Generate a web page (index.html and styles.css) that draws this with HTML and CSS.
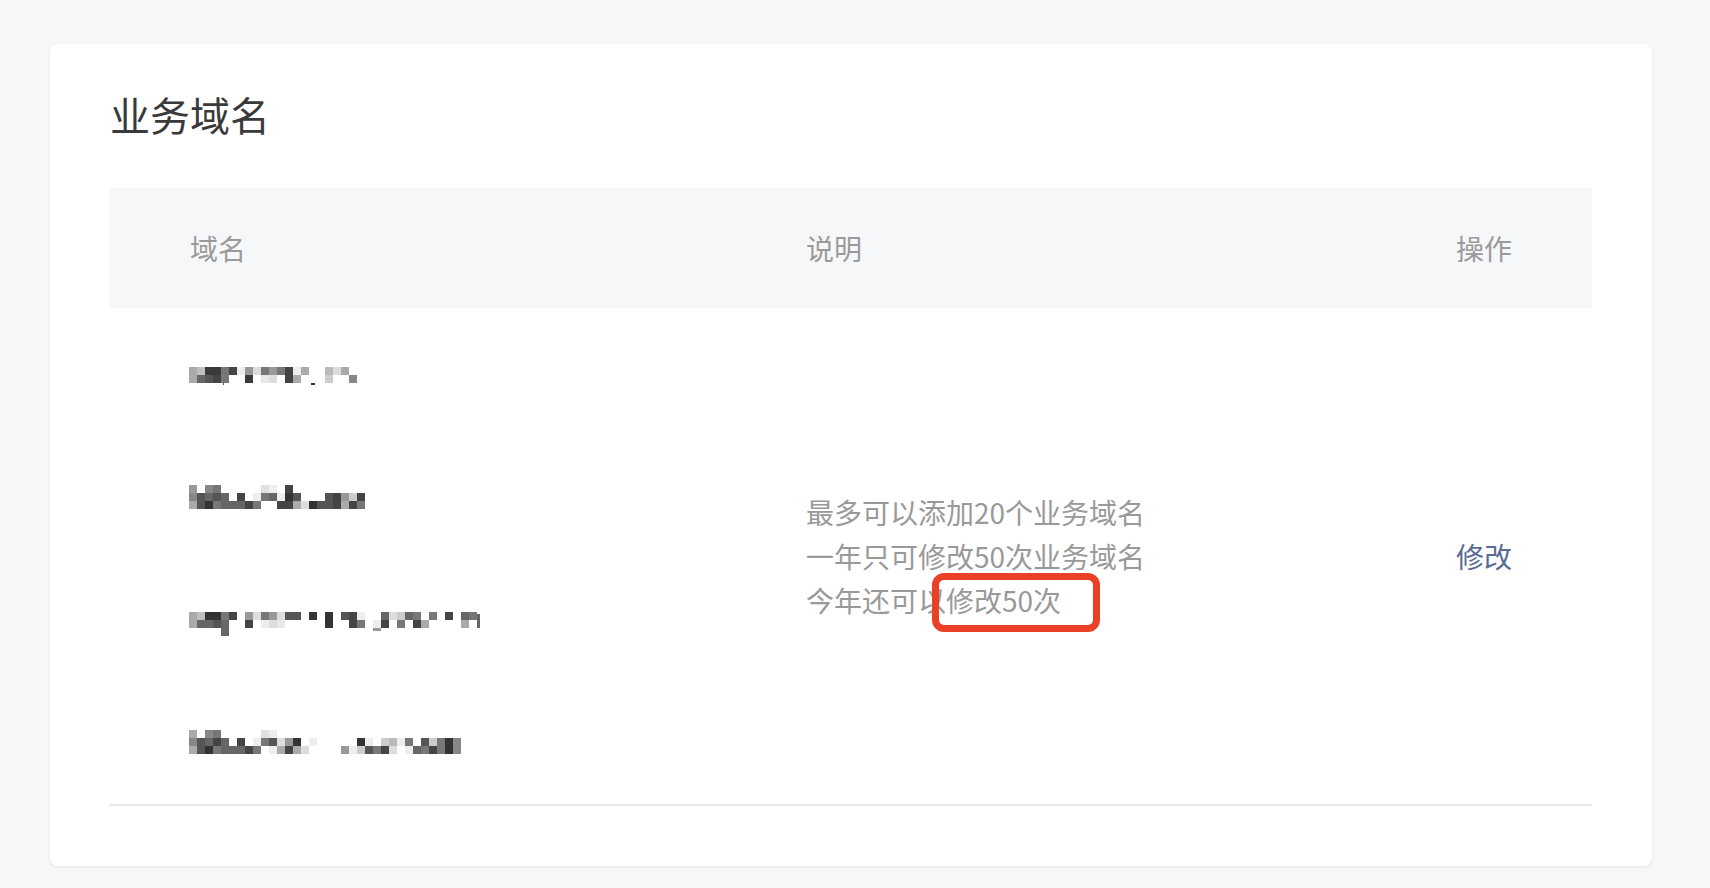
FILE: index.html
```html
<!DOCTYPE html>
<html lang="zh-CN">
<head>
<meta charset="utf-8">
<title>业务域名</title>
<link rel="stylesheet" href="styles.css">
</head>
<body>
<div class="page">
  <section class="card">
    <h2 class="title">业务域名</h2>
    <div class="table">
      <div class="thead">
        <div class="th">域名</div>
        <div class="th">说明</div>
        <div class="th th-op">操作</div>
      </div>
      <div class="tbody">
        <div class="col-domains">
          <div class="domain-row">
            <svg class="mosaic" width="168" height="40" shape-rendering="crispEdges" aria-label="已打码域名">
              <g transform="translate(0,17) scale(8)">
                <rect x="0" y="0" width="1" height="1" fill="#aaa"/><rect x="1" y="0" width="1" height="1" fill="#c0c0c0"/><rect x="2" y="0" width="1" height="1" fill="#3a3a3a"/><rect x="3" y="0" width="1" height="1" fill="#3a3a3a"/><rect x="4" y="0" width="1" height="1" fill="#777"/><rect x="5" y="0" width="1" height="1" fill="#444"/><rect x="6" y="0" width="1" height="1" fill="#eee"/><rect x="7" y="0" width="1" height="1" fill="#999"/><rect x="8" y="0" width="1" height="1" fill="#ddd"/><rect x="9" y="0" width="1" height="1" fill="#777"/><rect x="10" y="0" width="1" height="1" fill="#999"/><rect x="11" y="0" width="1" height="1" fill="#777"/><rect x="12" y="0" width="1" height="1" fill="#444"/><rect x="13" y="0" width="1" height="1" fill="#eee"/><rect x="14" y="0" width="1" height="1" fill="#aaa"/><rect x="17" y="0" width="1" height="1" fill="#bbb"/><rect x="18" y="0" width="1" height="1" fill="#ddd"/><rect x="19" y="0" width="1" height="1" fill="#aaa"/>
                <rect x="0" y="1" width="1" height="1" fill="#aaa"/><rect x="1" y="1" width="1" height="1" fill="#666"/><rect x="2" y="1" width="1" height="1" fill="#555"/><rect x="3" y="1" width="1" height="1" fill="#444"/><rect x="4" y="1" width="1" height="1" fill="#777"/><rect x="7" y="1" width="1" height="1" fill="#3a3a3a"/><rect x="9" y="1" width="1" height="1" fill="#e8e8e8"/><rect x="10" y="1" width="1" height="1" fill="#ddd"/><rect x="12" y="1" width="1" height="1" fill="#444"/><rect x="13" y="1" width="1" height="1" fill="#aaa"/><rect x="17" y="1" width="1" height="1" fill="#ccc"/><rect x="20" y="1" width="1" height="1" fill="#888"/>
                <rect x="15.2" y="2" width="0.5" height="0.3" fill="#333"/><rect x="4.2" y="2" width="0.2" height="0.3" fill="#555"/>
              </g>
            </svg>
          </div>
          <div class="domain-row">
            <svg class="mosaic" width="176" height="40" shape-rendering="crispEdges" aria-label="已打码域名">
              <g transform="translate(0,11) scale(8)">
                <rect x="0" y="0" width="1" height="1" fill="#999"/><rect x="2" y="0" width="1" height="1" fill="#888"/><rect x="3" y="0" width="1" height="1" fill="#777"/><rect x="9" y="0" width="1" height="1" fill="#e0e0e0"/><rect x="10" y="0" width="1" height="1" fill="#eee"/><rect x="12" y="0" width="1" height="1" fill="#444"/>
                <rect x="0" y="1" width="1" height="1" fill="#888"/><rect x="1" y="1" width="1" height="1" fill="#555"/><rect x="2" y="1" width="1" height="1" fill="#666"/><rect x="3" y="1" width="1" height="1" fill="#555"/><rect x="4" y="1" width="1" height="1" fill="#666"/><rect x="6" y="1" width="1" height="1" fill="#444"/><rect x="8" y="1" width="1" height="1" fill="#eee"/><rect x="9" y="1" width="1" height="1" fill="#777"/><rect x="10" y="1" width="1" height="1" fill="#666"/><rect x="11" y="1" width="1" height="1" fill="#eee"/><rect x="12" y="1" width="1" height="1" fill="#333"/><rect x="13" y="1" width="1" height="1" fill="#555"/><rect x="17" y="1" width="1" height="1" fill="#555"/><rect x="18" y="1" width="1" height="1" fill="#444"/><rect x="19" y="1" width="1" height="1" fill="#999"/><rect x="20" y="1" width="1" height="1" fill="#ccc"/><rect x="21" y="1" width="1" height="1" fill="#444"/>
                <rect x="0" y="2" width="1" height="1" fill="#aaa"/><rect x="1" y="2" width="1" height="1" fill="#555"/><rect x="2" y="2" width="1" height="1" fill="#333"/><rect x="3" y="2" width="1" height="1" fill="#777"/><rect x="4" y="2" width="1" height="1" fill="#666"/><rect x="5" y="2" width="1" height="1" fill="#666"/><rect x="6" y="2" width="1" height="1" fill="#666"/><rect x="7" y="2" width="1" height="1" fill="#444"/><rect x="8" y="2" width="1" height="1" fill="#777"/><rect x="11" y="2" width="1" height="1" fill="#444"/><rect x="12" y="2" width="1" height="1" fill="#444"/><rect x="13" y="2" width="1" height="1" fill="#aaa"/><rect x="14" y="2" width="1" height="1" fill="#ddd"/><rect x="15" y="2" width="1" height="1" fill="#333"/><rect x="16" y="2" width="1" height="1" fill="#555"/><rect x="17" y="2" width="1" height="1" fill="#555"/><rect x="18" y="2" width="1" height="1" fill="#444"/><rect x="19" y="2" width="1" height="1" fill="#aaa"/><rect x="20" y="2" width="1" height="1" fill="#444"/><rect x="21" y="2" width="1" height="1" fill="#777"/>
              </g>
            </svg>
          </div>
          <div class="domain-row">
            <svg class="mosaic" width="300" height="40" shape-rendering="crispEdges" aria-label="已打码域名">
              <g transform="translate(0,14) scale(8)">
                <rect x="0" y="0" width="1" height="1" fill="#aaa"/><rect x="1" y="0" width="1" height="1" fill="#c0c0c0"/><rect x="2" y="0" width="1" height="1" fill="#333"/><rect x="3" y="0" width="1" height="1" fill="#333"/><rect x="4" y="0" width="1" height="1" fill="#777"/><rect x="5" y="0" width="1" height="1" fill="#444"/><rect x="7" y="0" width="1" height="1" fill="#999"/><rect x="8" y="0" width="1" height="1" fill="#ddd"/><rect x="9" y="0" width="1" height="1" fill="#777"/><rect x="10" y="0" width="1" height="1" fill="#999"/><rect x="11" y="0" width="1" height="1" fill="#ddd"/><rect x="12" y="0" width="1" height="1" fill="#555"/><rect x="13" y="0" width="1" height="1" fill="#555"/><rect x="15" y="0" width="1" height="1" fill="#333"/><rect x="17" y="0" width="1" height="1" fill="#333"/><rect x="19" y="0" width="1" height="1" fill="#555"/><rect x="20" y="0" width="1" height="1" fill="#444"/><rect x="21" y="0" width="1" height="1" fill="#eee"/><rect x="24" y="0" width="1" height="1" fill="#666"/><rect x="25" y="0" width="1" height="1" fill="#ddd"/><rect x="26" y="0" width="1" height="1" fill="#ccc"/><rect x="27" y="0" width="1" height="1" fill="#666"/><rect x="28" y="0" width="1" height="1" fill="#777"/><rect x="30" y="0" width="1" height="1" fill="#777"/><rect x="32" y="0" width="1" height="1" fill="#444"/><rect x="34" y="0" width="1" height="1" fill="#666"/><rect x="35" y="0" width="1" height="1" fill="#777"/><rect x="36" y="0.3" width="0.4" height="1.7" fill="#666"/>
                <rect x="0" y="1" width="1" height="1" fill="#aaa"/><rect x="1" y="1" width="1" height="1" fill="#666"/><rect x="2" y="1" width="1" height="1" fill="#666"/><rect x="3" y="1" width="1" height="1" fill="#555"/><rect x="4" y="1" width="1" height="1" fill="#666"/><rect x="7" y="1" width="1" height="1" fill="#444"/><rect x="9" y="1" width="1" height="1" fill="#eee"/><rect x="10" y="1" width="1" height="1" fill="#ddd"/><rect x="11" y="1" width="1" height="1" fill="#e8e8e8"/><rect x="17" y="1" width="1" height="1" fill="#333"/><rect x="20" y="1" width="1" height="1" fill="#444"/><rect x="21" y="1" width="1" height="1" fill="#777"/><rect x="23" y="1" width="1" height="1" fill="#eee"/><rect x="24" y="1" width="1" height="1" fill="#444"/><rect x="26" y="1" width="1" height="1" fill="#777"/><rect x="28" y="1" width="1" height="1" fill="#444"/><rect x="29" y="1" width="1" height="1" fill="#aaa"/><rect x="34" y="1" width="1" height="1" fill="#aaa"/>
                <rect x="4" y="2" width="1" height="1" fill="#666"/><rect x="23" y="2" width="1" height="0.4" fill="#999"/>
              </g>
            </svg>
          </div>
          <div class="domain-row">
            <svg class="mosaic" width="272" height="40" shape-rendering="crispEdges" aria-label="已打码域名">
              <g transform="translate(0,8) scale(8)">
                <rect x="0" y="0" width="1" height="1" fill="#aaa"/><rect x="2" y="0" width="1" height="1" fill="#888"/><rect x="3" y="0" width="1" height="1" fill="#777"/><rect x="9" y="0" width="1" height="1" fill="#e0e0e0"/><rect x="10" y="0" width="1" height="1" fill="#eee"/>
                <rect x="0" y="1" width="1" height="1" fill="#888"/><rect x="1" y="1" width="1" height="1" fill="#555"/><rect x="2" y="1" width="1" height="1" fill="#666"/><rect x="3" y="1" width="1" height="1" fill="#444"/><rect x="4" y="1" width="1" height="1" fill="#666"/><rect x="6" y="1" width="1" height="1" fill="#444"/><rect x="8" y="1" width="1" height="1" fill="#eee"/><rect x="9" y="1" width="1" height="1" fill="#777"/><rect x="10" y="1" width="1" height="1" fill="#555"/><rect x="11" y="1" width="1" height="1" fill="#ddd"/><rect x="12" y="1" width="1" height="1" fill="#999"/><rect x="13" y="1" width="1" height="1" fill="#333"/><rect x="15" y="1" width="1" height="1" fill="#eee"/><rect x="21" y="1" width="1" height="1" fill="#333"/><rect x="22" y="1" width="1" height="1" fill="#eee"/><rect x="24" y="1" width="1" height="1" fill="#ccc"/><rect x="25" y="1" width="1" height="1" fill="#bbb"/><rect x="26" y="1" width="1" height="1" fill="#eee"/><rect x="27" y="1" width="1" height="1" fill="#777"/><rect x="29" y="1" width="1" height="1" fill="#555"/><rect x="30" y="1" width="1" height="1" fill="#ccc"/><rect x="31" y="1" width="1" height="1" fill="#777"/><rect x="32" y="1" width="1" height="1" fill="#333"/><rect x="33" y="1" width="1" height="1" fill="#888"/>
                <rect x="0" y="2" width="1" height="1" fill="#aaa"/><rect x="1" y="2" width="1" height="1" fill="#555"/><rect x="2" y="2" width="1" height="1" fill="#333"/><rect x="3" y="2" width="1" height="1" fill="#777"/><rect x="4" y="2" width="1" height="1" fill="#666"/><rect x="5" y="2" width="1" height="1" fill="#666"/><rect x="6" y="2" width="1" height="1" fill="#666"/><rect x="7" y="2" width="1" height="1" fill="#444"/><rect x="8" y="2" width="1" height="1" fill="#777"/><rect x="10" y="2" width="1" height="1" fill="#eee"/><rect x="11" y="2" width="1" height="1" fill="#aaa"/><rect x="12" y="2" width="1" height="1" fill="#444"/><rect x="13" y="2" width="1" height="1" fill="#aaa"/><rect x="14" y="2" width="1" height="1" fill="#ddd"/><rect x="19" y="2" width="1" height="1" fill="#999"/><rect x="20" y="2" width="1" height="1" fill="#eee"/><rect x="21" y="2" width="1" height="1" fill="#ccc"/><rect x="22" y="2" width="1" height="1" fill="#555"/><rect x="23" y="2" width="1" height="1" fill="#777"/><rect x="24" y="2" width="1" height="1" fill="#444"/><rect x="25" y="2" width="1" height="1" fill="#ddd"/><rect x="27" y="2" width="1" height="1" fill="#eee"/><rect x="28" y="2" width="1" height="1" fill="#666"/><rect x="29" y="2" width="1" height="1" fill="#777"/><rect x="30" y="2" width="1" height="1" fill="#444"/><rect x="31" y="2" width="1" height="1" fill="#777"/><rect x="32" y="2" width="1" height="1" fill="#333"/><rect x="33" y="2" width="1" height="1" fill="#888"/>
              </g>
            </svg>
          </div>
        </div>
        <div class="col-desc">
          <div class="desc">
            <div class="desc-line">最多可以添加20个业务域名</div>
            <div class="desc-line">一年只可修改50次业务域名</div>
            <div class="desc-line">今年还可以修改50次</div>
            <span class="mark" aria-hidden="true"></span>
          </div>
        </div>
        <div class="col-op">
          <a class="link" href="#">修改</a>
        </div>
      </div>
    </div>
  </section>
</div>
</body>
</html>
```
FILE: styles.css
```css
html, body {
  margin: 0;
  padding: 0;
}

body {
  background: #f6f7f9;
  font-family: "Noto Sans CJK SC", "Noto Sans", sans-serif;
  color: #353535;
}

.page {
  padding: 44px 58px 22px 50px;
}

.card {
  background: #fff;
  border-radius: 8px;
  box-shadow: 0 1px 3px rgba(0, 0, 0, 0.08);
  padding: 50px 60px 60px 60px;
}

.title {
  margin: 0 0 54px 0;
  font-size: 40px;
  line-height: 40px;
  font-weight: 400;
  color: #3a3a3a;
}

.thead,
.tbody {
  display: grid;
  grid-template-columns: 616px 1fr auto;
  padding: 0 80px;
}

.thead {
  background: #f6f7f9;
  height: 120px;
  align-items: center;
}

.th {
  font-size: 28px;
  line-height: 40px;
  color: #9a9a9a;
}

.th-op {
  text-align: right;
}

.tbody {
  border-bottom: 2px solid #e7e7eb;
}

.col-domains {
  display: flex;
  flex-direction: column;
}

.domain-row {
  height: 124px;
  display: flex;
  align-items: center;
}

.mosaic {
  display: block;
  margin-left: -1px;
}

.col-desc,
.col-op {
  display: flex;
  align-items: center;
}

.col-op {
  justify-content: flex-end;
}

.desc {
  position: relative;
  font-size: 28px;
  line-height: 44px;
  color: #999;
}

.desc-line {
  white-space: nowrap;
}

.mark {
  position: absolute;
  left: 126px;
  top: 83px;
  width: 168px;
  height: 59px;
  box-sizing: border-box;
  border: 7px solid #ea4126;
  border-radius: 12px;
}

.link {
  font-size: 28px;
  line-height: 44px;
  color: #576b95;
  text-decoration: none;
}
```
